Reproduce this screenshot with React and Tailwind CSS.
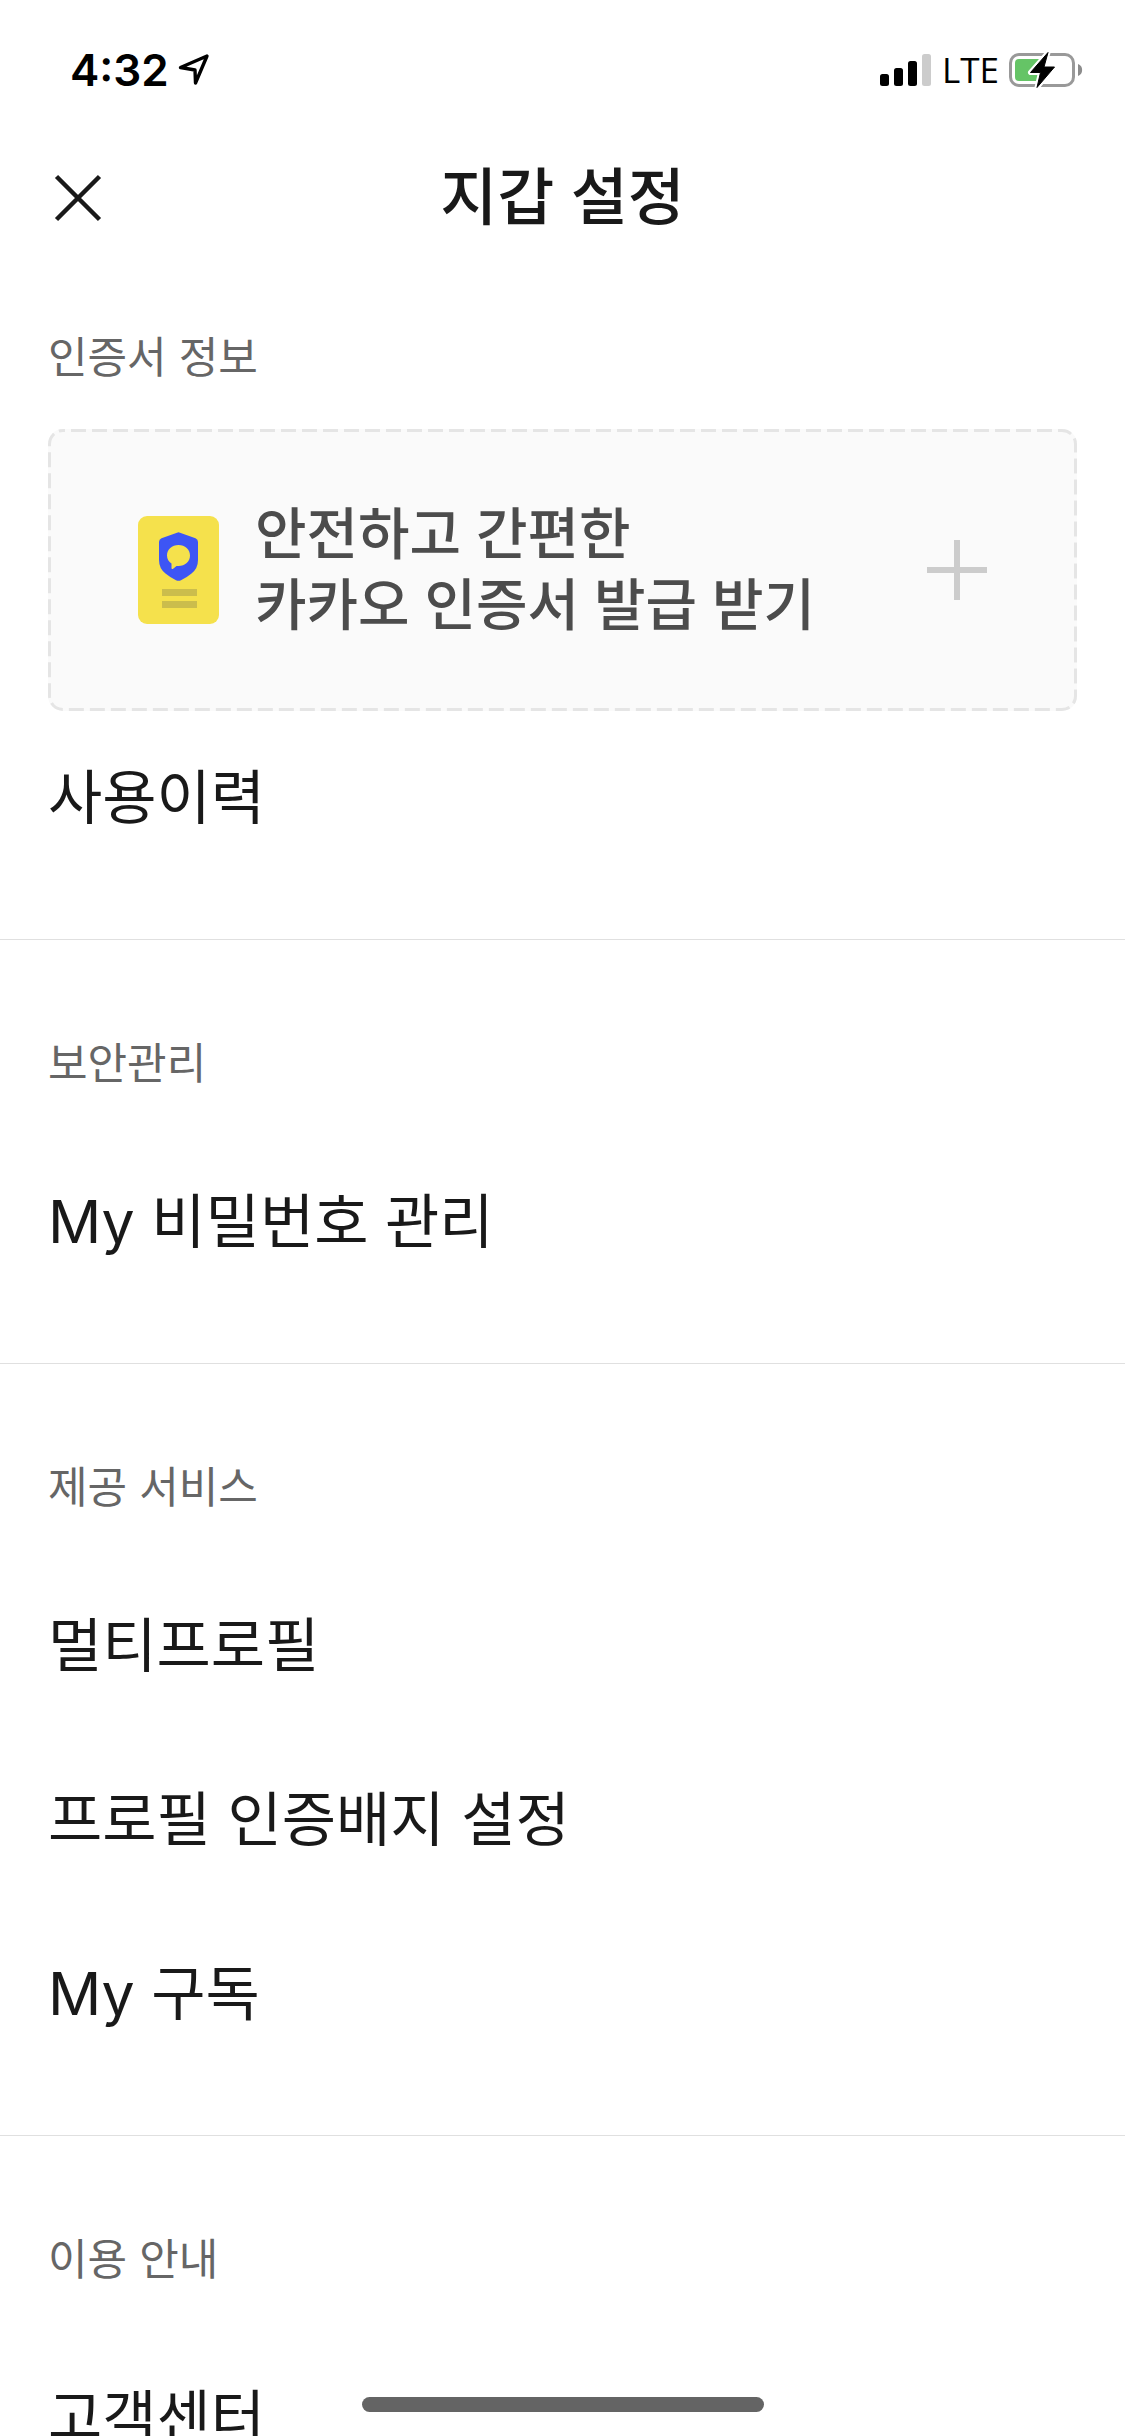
const SECTIONS = [
  { title: '보안관리', items: ['My 비밀번호 관리'] },
  { title: '제공 서비스', items: ['멀티프로필', '프로필 인증배지 설정', 'My 구독'] },
  { title: '이용 안내', items: ['고객센터'] },
];

function StatusBar() {
  return (
    <div className="flex h-[132px] shrink-0 items-center justify-between pr-[42px] pl-[70px] pt-2 text-black">
      <div className="flex items-center gap-[8px]">
        <span className="text-[44px] leading-[48px] font-semibold">4:32</span>
        <svg width="34" height="34" viewBox="0 0 34 34" fill="none" stroke="currentColor" strokeWidth="3.4" strokeLinejoin="round" aria-hidden="true">
          <path d="M30 3 L3.500 14.500 L18 17 L18.500 30 Z" />
        </svg>
      </div>
      <div className="flex items-center gap-[10px]">
        <svg width="52" height="34" viewBox="0 0 52 34" aria-hidden="true">
          <rect x="0" y="21" width="9" height="12" rx="2.500" />
          <rect x="14" y="15" width="9" height="18" rx="2.500" />
          <rect x="28" y="8" width="9" height="25" rx="2.500" />
          <rect x="42" y="1" width="9" height="32" rx="2.500" fill="#cccccc" />
        </svg>
        <span className="font-['Open_Sans',sans-serif] text-[35px] leading-[48px] font-medium">LTE</span>
        <svg width="74" height="38" viewBox="0 0 74 38" aria-hidden="true">
          <rect x="1.500" y="3.500" width="63" height="31" rx="8.500" fill="none" stroke="#999999" strokeWidth="3" />
          <path d="M69 13 C74.500 14.500 74.500 23.500 69 25 Z" fill="#8c8c8c" />
          <rect x="6" y="8" width="29" height="22" rx="4" fill="#65c466" />
          <path d="M39 1.500 L21.500 21.500 H31.500 L28 36.500 L45.500 16 H35 Z" stroke="#ffffff" strokeWidth="5" strokeLinejoin="round" />
          <path d="M39 1.500 L21.500 21.500 H31.500 L28 36.500 L45.500 16 H35 Z" stroke="#000000" strokeWidth="1" strokeLinejoin="round" />
        </svg>
      </div>
    </div>
  );
}

function CertificateIcon() {
  return (
    <svg className="shrink-0" width="81" height="108" viewBox="0 0 81 108" aria-hidden="true">
      <rect width="81" height="108" rx="9" fill="#f5e14c" />
      <path
        d="M39 16.700 Q40.500 16 42 16.700 L57.500 22.200 Q60 23.200 60 26 V44 Q60 52.500 53.500 57.500 Q48 62 43 64.200 Q40.500 65.200 38 64.200 Q33 62 27.500 57.500 Q21 52.500 21 44 V26 Q21 23.200 23.500 22.200 Z"
        fill="#3d55f5"
      />
      <path
        d="M40.500 29 C47 29 52 33.600 52 39.500 C52 45.500 47 50 40.500 50 H38.500 L34.800 52.900 Q33.500 53.500 33.500 52 V47.600 C30.800 45.800 29 43 29 39.500 C29 33.600 34 29 40.500 29 Z"
        fill="#f5e14c"
      />
      <rect x="24" y="73" width="35" height="7" fill="#cbbd4c" />
      <rect x="24" y="85" width="35" height="7" fill="#cbbd4c" />
    </svg>
  );
}

function CertificateCard() {
  return (
    <button
      type="button"
      className="relative flex h-[282px] w-full items-center gap-[36px] overflow-hidden rounded-[15px] bg-[#fafafa] px-[90px] text-left"
    >
      <svg className="absolute inset-0 size-full" aria-hidden="true">
        <rect width="100%" height="100%" rx="15" fill="none" stroke="#e5e5e5" strokeWidth="6" strokeDasharray="15 6" strokeDashoffset="13" />
      </svg>
      <CertificateIcon />
      <span className="flex-1 text-[56px] leading-[71px] font-medium text-[#4c4c4c]">
        <span className="block">안전하고 간편한</span>
        <span className="block">카카오 인증서 발급 받기</span>
      </span>
      <svg className="shrink-0" width="60" height="60" viewBox="0 0 60 60" stroke="#cccccc" strokeWidth="6" aria-hidden="true">
        <path d="M30 0 V60 M0 30 H60" />
      </svg>
    </button>
  );
}

function SectionTitle({ children }) {
  return <h2 className="mb-[42px] text-[43px] leading-[60px] text-[#666666]">{children}</h2>;
}

function MenuItem({ children }) {
  return (
    <a href="#" className="flex h-[174px] items-center text-[59px] leading-[90px] text-[#191919]">
      {children}
    </a>
  );
}

export default function App() {
  return (
    <div className="flex h-screen flex-col overflow-hidden bg-white font-['Inter','Noto_Sans_CJK_KR',sans-serif]">
      <StatusBar />
      <header className="grid h-[132px] shrink-0 grid-cols-[60px_1fr_60px] items-center px-[48px]">
        <button type="button" aria-label="닫기" className="text-[#191919]">
          <svg width="60" height="60" viewBox="0 0 60 60" fill="none" stroke="currentColor" strokeWidth="4.500" aria-hidden="true">
            <path d="M8.500 8.500 L51.500 51.500 M51.500 8.500 L8.500 51.500" />
          </svg>
        </button>
        <h1 className="text-center text-[62px] leading-[90px] font-medium text-[#191919]">지갑 설정</h1>
      </header>
      <main className="min-h-0 flex-1 overflow-y-auto [scrollbar-width:none]">
        <section className="px-[48px] pt-[63px] pb-[54px]">
          <SectionTitle>인증서 정보</SectionTitle>
          <CertificateCard />
          <MenuItem>사용이력</MenuItem>
        </section>
        {SECTIONS.map((section) => (
          <section key={section.title} className="border-t border-[#e0e0e0] px-[48px] pt-[93px] pb-[54px]">
            <SectionTitle>{section.title}</SectionTitle>
            {section.items.map((item) => (
              <MenuItem key={item}>{item}</MenuItem>
            ))}
          </section>
        ))}
      </main>
      <div className="fixed bottom-6 left-1/2 h-[15px] w-[402px] -translate-x-1/2 rounded-full bg-[#646464]" />
    </div>
  );
}
